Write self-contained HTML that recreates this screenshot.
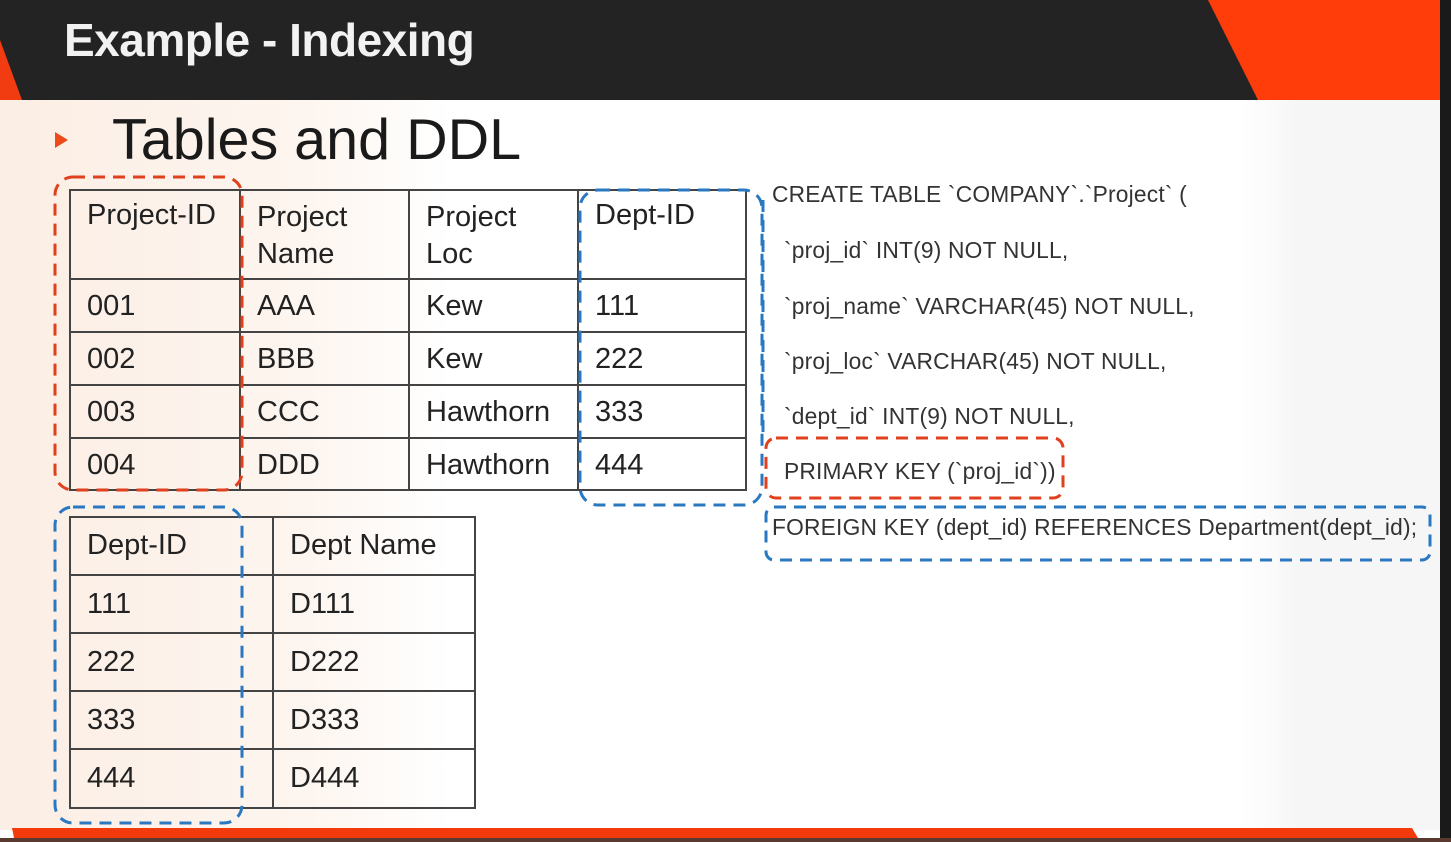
<!DOCTYPE html>
<html><head><meta charset="utf-8"><style>
*{margin:0;padding:0}
body{width:1451px;height:842px;overflow:hidden;position:relative;background:#fff;font-family:"Liberation Sans",Arial,sans-serif}
.bg{position:absolute;left:0;top:100px;width:1451px;height:730px;background:linear-gradient(90deg,#fbeee4 0px,#fdf5ef 300px,#fff 450px,#fff 1240px,#f6f6f6 1300px)}
.t{position:absolute;font-size:29px;color:#222}
.d{position:absolute;left:772px;font-size:23px;color:#333;white-space:nowrap;transform-origin:left top;transform:scaleX(0.99);letter-spacing:0.2px}
</style></head><body>
<div class="bg"></div>
<svg width="1451" height="842" style="position:absolute;left:0;top:0">
<rect x="0" y="0" width="1451" height="100" fill="#232323"/>
<polygon points="0,40 0,100 22,100" fill="#f03c10"/>
<polygon points="1208,0 1440,0 1440,100 1258,100" fill="#ff3d0a"/>
<rect x="1440" y="0" width="11" height="842" fill="#1a1a1a"/>
<polygon points="12,828 1412,828 1418,838 14,838" fill="#f23a0c"/>
<rect x="0" y="838" width="1451" height="4" fill="#5a3a30"/>
<polygon points="55,132 68,140 55,148" fill="#ee4a1a"/>
<g fill="none" stroke="#444" stroke-width="2">
<rect x="70" y="190" width="676" height="300"/>
<line x1="240" y1="190" x2="240" y2="490"/><line x1="409" y1="190" x2="409" y2="490"/><line x1="578" y1="190" x2="578" y2="490"/>
<line x1="70" y1="279" x2="746" y2="279"/><line x1="70" y1="332" x2="746" y2="332"/><line x1="70" y1="385" x2="746" y2="385"/><line x1="70" y1="438" x2="746" y2="438"/>
<rect x="70" y="517" width="405" height="291"/>
<line x1="273" y1="517" x2="273" y2="808"/>
<line x1="70" y1="575" x2="475" y2="575"/><line x1="70" y1="633" x2="475" y2="633"/><line x1="70" y1="691" x2="475" y2="691"/><line x1="70" y1="749" x2="475" y2="749"/>
</g>
<g fill="none" stroke-width="3" stroke-dasharray="12,8">
<rect x="55" y="177" width="187" height="313" rx="18" stroke="#e0401e"/>
<rect x="580" y="190" width="182" height="315" rx="18" stroke="#2a78c2"/>
<rect x="55" y="507" width="187" height="316" rx="18" stroke="#2a78c2"/>
<line x1="763" y1="200" x2="763" y2="440" stroke="#2a78c2"/>
<rect x="766" y="438" width="297" height="60" rx="10" stroke="#e0401e"/>
<rect x="766" y="507" width="664" height="53" rx="8" stroke="#2a78c2"/>
</g>
</svg>
<div style="position:absolute;left:64px;top:13px;color:#f2f2f2;font-size:46px;font-weight:bold;letter-spacing:-0.5px">Example - Indexing</div>
<div style="position:absolute;left:112px;top:107px;font-size:57.5px;color:#1a1a1a">Tables and DDL</div>
<div class="t" style="left:87px;top:199px">Project-ID</div>
<div class="t" style="left:257px;top:199px;line-height:37px">Project<br>Name</div>
<div class="t" style="left:426px;top:199px;line-height:37px">Project<br>Loc</div>
<div class="t" style="left:595px;top:199px">Dept-ID</div>
<div class="t" style="left:87px;top:290px">001</div><div class="t" style="left:257px;top:290px">AAA</div><div class="t" style="left:426px;top:290px">Kew</div><div class="t" style="left:595px;top:290px">111</div>
<div class="t" style="left:87px;top:343px">002</div><div class="t" style="left:257px;top:343px">BBB</div><div class="t" style="left:426px;top:343px">Kew</div><div class="t" style="left:595px;top:343px">222</div>
<div class="t" style="left:87px;top:396px">003</div><div class="t" style="left:257px;top:396px">CCC</div><div class="t" style="left:426px;top:396px">Hawthorn</div><div class="t" style="left:595px;top:396px">333</div>
<div class="t" style="left:87px;top:449px">004</div><div class="t" style="left:257px;top:449px">DDD</div><div class="t" style="left:426px;top:449px">Hawthorn</div><div class="t" style="left:595px;top:449px">444</div>
<div class="t" style="left:87px;top:529px">Dept-ID</div><div class="t" style="left:290px;top:529px">Dept Name</div>
<div class="t" style="left:87px;top:588px">111</div><div class="t" style="left:290px;top:588px">D111</div>
<div class="t" style="left:87px;top:646px">222</div><div class="t" style="left:290px;top:646px">D222</div>
<div class="t" style="left:87px;top:704px">333</div><div class="t" style="left:290px;top:704px">D333</div>
<div class="t" style="left:87px;top:762px">444</div><div class="t" style="left:290px;top:762px">D444</div>
<div class="d" style="top:181px">CREATE TABLE `COMPANY`.`Project` (</div>
<div class="d" style="top:237px;left:784px">`proj_id` INT(9) NOT NULL,</div>
<div class="d" style="top:293px;left:784px">`proj_name` VARCHAR(45) NOT NULL,</div>
<div class="d" style="top:348px;left:784px">`proj_loc` VARCHAR(45) NOT NULL,</div>
<div class="d" style="top:403px;left:784px">`dept_id` INT(9) NOT NULL,</div>
<div class="d" style="top:458px;left:784px">PRIMARY KEY (`proj_id`))</div>
<div class="d" style="top:514px;left:772px">FOREIGN KEY (dept_id) REFERENCES Department(dept_id);</div>
</body></html>
